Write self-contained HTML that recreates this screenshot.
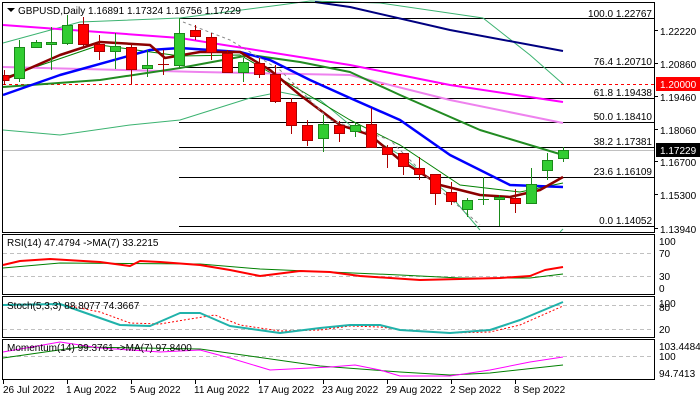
<!DOCTYPE html>
<html><head><style>
html,body{margin:0;padding:0;background:#fff;width:700px;height:400px;overflow:hidden}
svg{display:block;font-family:"Liberation Sans",sans-serif}
</style></head><body>
<svg width="700" height="400" viewBox="0 0 700 400" xmlns="http://www.w3.org/2000/svg">
<rect width="700" height="400" fill="#fff"/>
<!-- fib lines -->
<g stroke="#000" stroke-width="1" shape-rendering="crispEdges">
<line x1="179" y1="18.5" x2="654" y2="18.5"/>
<line x1="179" y1="67.5" x2="654" y2="67.5"/>
<line x1="179" y1="98.5" x2="654" y2="98.5"/>
<line x1="179" y1="122.5" x2="654" y2="122.5"/>
<line x1="179" y1="147.5" x2="654" y2="147.5"/>
<line x1="179" y1="177.5" x2="654" y2="177.5"/>
<line x1="179" y1="226.5" x2="654" y2="226.5"/>
</g>
<line x1="3" y1="150.5" x2="654" y2="150.5" stroke="#c0c0c0"/>
<line x1="3" y1="84.5" x2="654" y2="84.5" stroke="#f00" stroke-dasharray="3,3"/>
<g fill="none" stroke-linejoin="round">
<!-- bollinger -->
<polyline stroke="#3cb371" stroke-width="1" points="3,43 80,22 180,18 280,5 310,1 380,3 483,18 530,55 563,84"/>
<polyline stroke="#3cb371" stroke-width="1" points="3,130 60,135 130,125 180,120 250,98 280,92 320,100 350,125 400,155 450,195 480,230"/>
<polyline stroke="#3cb371" stroke-width="1" points="560,232 563,229"/>
<polyline stroke="#008000" stroke-width="1" points="3,78 100,45 180,56 240,55 300,90 350,120 400,145 460,185 520,192 563,183"/>
<!-- MAs -->
<polyline stroke="#000080" stroke-width="2" points="315,2 350,7 450,30 563,51"/>
<polyline stroke="#ff00ff" stroke-width="2" points="3,25 180,38 350,65 450,85 563,102"/>
<polyline stroke="#ee82ee" stroke-width="2" points="3,67 200,72 350,75 450,100 563,123"/>
<polyline stroke="#228b22" stroke-width="2" points="3,87 100,80 180,68 250,55 300,62 350,72 400,95 480,130 563,155"/>
<polyline stroke="#0000ff" stroke-width="2.5" points="3,95 60,75 150,50 180,48 240,52 270,60 310,80 350,98 400,120 450,155 510,185 563,187"/>
<polyline stroke="#8b0000" stroke-width="2.5" points="3,80 60,55 100,42 150,45 165,58 200,52 240,52 270,70 300,95 340,125 370,135 400,160 440,185 480,195 510,197 540,190 563,177"/>
<polyline stroke="#888" stroke-width="1" stroke-dasharray="3,3" points="183,22 230,40 280,70 330,120 390,140 440,190 480,225"/>
</g>
<!-- candles -->
<g shape-rendering="crispEdges" stroke-width="1">
<g stroke="#1a8a1a" fill="#32cd32">
<line x1="19.5" y1="40" x2="19.5" y2="82"/><rect x="14.5" y="47.5" width="10" height="31"/>
<line x1="36.5" y1="40" x2="36.5" y2="48"/><rect x="31.5" y="42.5" width="10" height="5"/>
<line x1="51.5" y1="27" x2="51.5" y2="70"/><rect x="46.5" y="42.5" width="10" height="2"/>
<line x1="67.5" y1="15" x2="67.5" y2="45"/><rect x="62.5" y="25.5" width="10" height="18"/>
<line x1="115.5" y1="33" x2="115.5" y2="69"/><rect x="110.5" y="46.5" width="10" height="5"/>
<line x1="147.5" y1="50" x2="147.5" y2="77"/><rect x="142.5" y="65.5" width="10" height="3"/>
<line x1="179.5" y1="18" x2="179.5" y2="68"/><rect x="174.5" y="33.5" width="10" height="32"/>
<line x1="243.5" y1="58" x2="243.5" y2="82"/><rect x="238.5" y="62.5" width="10" height="10"/>
<line x1="323.5" y1="115" x2="323.5" y2="152"/><rect x="318.5" y="124.5" width="10" height="14"/>
<line x1="355.5" y1="122" x2="355.5" y2="137"/><rect x="350.5" y="125.5" width="10" height="6"/>
<line x1="467.5" y1="198" x2="467.5" y2="217"/><rect x="462.5" y="200.5" width="10" height="9"/>
<line x1="483.5" y1="177" x2="483.5" y2="205"/><line x1="478" y1="199.5" x2="489" y2="199.5"/>
<line x1="499.5" y1="195" x2="499.5" y2="226"/><rect x="494.5" y="197.5" width="10" height="2"/>
<line x1="531.5" y1="168" x2="531.5" y2="204"/><rect x="526.5" y="184.5" width="10" height="19"/>
<line x1="547.5" y1="153" x2="547.5" y2="180"/><rect x="542.5" y="160.5" width="10" height="10"/>
<line x1="563.5" y1="147" x2="563.5" y2="162"/><rect x="558.5" y="150.5" width="10" height="8"/>
</g>
<g stroke="#a00" fill="#f00">
<line x1="4.5" y1="70" x2="4.5" y2="85"/><rect x="3" y="75.5" width="6" height="5"/>
<line x1="83.5" y1="17" x2="83.5" y2="46"/><rect x="78.5" y="24.5" width="10" height="20"/>
<line x1="99.5" y1="35" x2="99.5" y2="60"/><rect x="94.5" y="44.5" width="10" height="7"/>
<line x1="131.5" y1="44" x2="131.5" y2="84"/><rect x="126.5" y="47.5" width="10" height="22"/>
<line x1="163.5" y1="50" x2="163.5" y2="75"/><line x1="158" y1="64.5" x2="169" y2="64.5"/>
<line x1="195.5" y1="25" x2="195.5" y2="40"/><rect x="190.5" y="30.5" width="10" height="6"/>
<line x1="211.5" y1="33" x2="211.5" y2="60"/><rect x="206.5" y="37.5" width="10" height="15"/>
<line x1="227.5" y1="50" x2="227.5" y2="72"/><rect x="222.5" y="53.5" width="10" height="19"/>
<line x1="259.5" y1="58" x2="259.5" y2="78"/><rect x="254.5" y="63.5" width="10" height="11"/>
<line x1="275.5" y1="65" x2="275.5" y2="103"/><rect x="270.5" y="74.5" width="10" height="27"/>
<line x1="291.5" y1="98" x2="291.5" y2="134"/><rect x="286.5" y="102.5" width="10" height="23"/>
<line x1="307.5" y1="120" x2="307.5" y2="146"/><rect x="302.5" y="125.5" width="10" height="15"/>
<line x1="339.5" y1="121" x2="339.5" y2="142"/><rect x="334.5" y="125.5" width="10" height="8"/>
<line x1="371.5" y1="108" x2="371.5" y2="148"/><rect x="366.5" y="124.5" width="10" height="23"/>
<line x1="387.5" y1="145" x2="387.5" y2="168"/><rect x="382.5" y="147.5" width="10" height="7"/>
<line x1="403.5" y1="153" x2="403.5" y2="175"/><rect x="398.5" y="153.5" width="10" height="13"/>
<line x1="419.5" y1="157" x2="419.5" y2="180"/><rect x="414.5" y="168.5" width="10" height="6"/>
<line x1="435.5" y1="174" x2="435.5" y2="205"/><rect x="430.5" y="174.5" width="10" height="19"/>
<line x1="451.5" y1="182" x2="451.5" y2="205"/><rect x="446.5" y="192.5" width="10" height="9"/>
<line x1="515.5" y1="189" x2="515.5" y2="213"/><rect x="510.5" y="198.5" width="10" height="5"/>
</g>
</g>
<!-- frames -->
<g fill="none" stroke="#000" stroke-width="1" shape-rendering="crispEdges">
<rect x="2.5" y="2.5" width="652" height="230"/>
<rect x="2.5" y="234.5" width="652" height="60"/>
<rect x="2.5" y="296.5" width="652" height="41"/>
<rect x="2.5" y="339.5" width="652" height="40"/>
</g>
<!-- fib labels -->
<g font-size="10" fill="#000" text-anchor="end">
<text x="652" y="17">100.0 1.22767</text>
<text x="652" y="65">76.4 1.20710</text>
<text x="652" y="96">61.8 1.19438</text>
<text x="652" y="120">50.0 1.18410</text>
<text x="652" y="145">38.2 1.17381</text>
<text x="652" y="175">23.6 1.16109</text>
<text x="652" y="224">0.0 1.14052</text>
</g>
<g font-size="10" fill="#000">
<path d="M7 8 L15 8 L11 12 Z" fill="#000"/>
<text x="18" y="14">GBPUSD,Daily  1.16891 1.17324 1.16756 1.17229</text>
<text x="660" y="35">1.22220</text>
<text x="660" y="68">1.20860</text>
<text x="660" y="101">1.19460</text>
<text x="660" y="134">1.18060</text>
<text x="660" y="166">1.16700</text>
<text x="660" y="199">1.15300</text>
<text x="660" y="233">1.13940</text>
</g>
<rect x="656" y="77" width="44" height="14" fill="#f00"/>
<text x="660" y="88" font-size="10" fill="#fff">1.20000</text>
<rect x="656" y="143" width="44" height="14" fill="#000"/>
<text x="660" y="154" font-size="10" fill="#fff">1.17229</text>
<g stroke="#000" shape-rendering="crispEdges">
<line x1="654" y1="30.5" x2="658" y2="30.5"/><line x1="654" y1="63.5" x2="658" y2="63.5"/><line x1="654" y1="96.5" x2="658" y2="96.5"/><line x1="654" y1="129.5" x2="658" y2="129.5"/><line x1="654" y1="161.5" x2="658" y2="161.5"/><line x1="654" y1="194.5" x2="658" y2="194.5"/><line x1="654" y1="228.5" x2="658" y2="228.5"/>
</g>
<!-- indicator levels -->
<g stroke="#c0c0c0" stroke-dasharray="4,3" shape-rendering="crispEdges">
<line x1="3" y1="253.5" x2="654" y2="253.5"/>
<line x1="3" y1="276.5" x2="654" y2="276.5"/>
<line x1="3" y1="305.5" x2="654" y2="305.5"/>
<line x1="3" y1="329.5" x2="654" y2="329.5"/>
<line x1="3" y1="356.5" x2="654" y2="356.5"/>
</g>
<g fill="none" stroke-linejoin="round">
<polyline stroke="#008000" stroke-width="1" points="3,268 60,263 200,264 260,269 400,275 460,278 530,278 563,274"/>
<polyline stroke="#f00" stroke-width="2" points="3,265 20,261 50,259 100,262 130,266 140,261 160,262 200,265 230,270 260,276 300,271 330,272 360,276 420,280 500,278 530,276 545,270 563,267"/>
<polyline stroke="#f00" stroke-width="1" stroke-dasharray="2,2" points="3,305 60,304 100,312 130,323 160,324 190,319 215,315 240,325 280,331 320,330 350,326 380,327 410,331 450,333 490,332 520,325 563,306"/>
<polyline stroke="#20b2aa" stroke-width="2" points="3,305 60,304 100,318 120,325 150,326 180,313 200,313 230,326 280,333 320,328 350,325 380,325 400,330 450,333 490,330 520,320 563,302"/>
<polyline stroke="#008000" stroke-width="1" points="3,358 80,347 200,349 320,366 400,372 450,375 490,373 563,365"/>
<polyline stroke="#ff00ff" stroke-width="1" points="3,352 60,342 100,348 160,352 200,350 230,358 270,370 290,369 330,367 355,365 380,370 400,376 450,376 490,370 530,362 563,357"/>
</g>
<g font-size="10" fill="#000">
<text x="7" y="246">RSI(14) 47.4794  -&gt;MA(7) 33.2215</text>
<text x="7" y="309">Stoch(5,3,3) 88.8077 74.3667</text>
<text x="7" y="351">Momentum(14) 99.3761  -&gt;MA(7) 97.8400</text>
<text x="659" y="245">100</text>
<text x="659" y="257">70</text>
<text x="659" y="280">30</text>
<text x="659" y="292">0</text>
<text x="659" y="307">100</text>
<text x="659" y="311">80</text>
<text x="659" y="333">20</text>
<text x="659" y="350">103.4484</text>
<text x="659" y="360">100</text>
<text x="659" y="377">94.7413</text>
</g>
<g stroke="#000" shape-rendering="crispEdges">
<line x1="3.5" y1="380" x2="3.5" y2="384"/><line x1="67.5" y1="380" x2="67.5" y2="384"/><line x1="131.5" y1="380" x2="131.5" y2="384"/><line x1="195.5" y1="380" x2="195.5" y2="384"/><line x1="259.5" y1="380" x2="259.5" y2="384"/><line x1="323.5" y1="380" x2="323.5" y2="384"/><line x1="387.5" y1="380" x2="387.5" y2="384"/><line x1="451.5" y1="380" x2="451.5" y2="384"/><line x1="515.5" y1="380" x2="515.5" y2="384"/>
</g>
<g font-size="10" fill="#000">
<text x="3" y="393">26 Jul 2022</text>
<text x="66" y="393">1 Aug 2022</text>
<text x="130" y="393">5 Aug 2022</text>
<text x="194" y="393">11 Aug 2022</text>
<text x="258" y="393">17 Aug 2022</text>
<text x="322" y="393">23 Aug 2022</text>
<text x="386" y="393">29 Aug 2022</text>
<text x="450" y="393">2 Sep 2022</text>
<text x="514" y="393">8 Sep 2022</text>
</g>
</svg>
</body></html>
